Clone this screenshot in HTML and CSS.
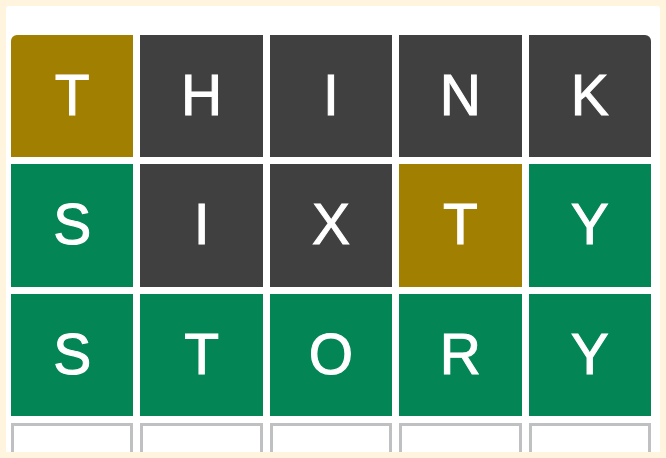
FILE: index.html
```html
<!DOCTYPE html>
<html lang="en">
<head>
<meta charset="utf-8">
<meta name="viewport" content="width=device-width, initial-scale=1">
<title>Word game</title>
<link rel="stylesheet" href="styles.css">
</head>
<body>
<main class="panel">
  <div class="board">
    <div class="tile present">T</div>
    <div class="tile absent">H</div>
    <div class="tile absent">I</div>
    <div class="tile absent">N</div>
    <div class="tile absent">K</div>
    <div class="tile correct">S</div>
    <div class="tile absent">I</div>
    <div class="tile absent">X</div>
    <div class="tile present">T</div>
    <div class="tile correct">Y</div>
    <div class="tile correct">S</div>
    <div class="tile correct">T</div>
    <div class="tile correct">O</div>
    <div class="tile correct">R</div>
    <div class="tile correct">Y</div>
    <div class="tile empty"></div>
    <div class="tile empty"></div>
    <div class="tile empty"></div>
    <div class="tile empty"></div>
    <div class="tile empty"></div>
  </div>
</main>
</body>
</html>
```
FILE: styles.css
```css
* {
  box-sizing: border-box;
}

body {
  margin: 0;
  padding: 6px;
  height: 100vh;
  background: #fff4de;
  font-family: "Liberation Sans", Arial, sans-serif;
}

.panel {
  height: 100%;
  padding: 29px 9px 0 5px;
  overflow: hidden;
  border-radius: 3px 3px 0 0;
  background: #fff;
}

.board {
  display: grid;
  grid-template-columns: repeat(5, 1fr);
  gap: 7px;
}

.tile {
  display: flex;
  align-items: center;
  justify-content: center;
  aspect-ratio: 1;
  padding-bottom: 2px;
  color: #fff;
  font-size: 57px;
  line-height: 1;
  -webkit-text-stroke: 1px #fff;
}

.tile:first-child {
  border-top-left-radius: 6px;
}

.tile:nth-child(5) {
  border-top-right-radius: 6px;
}

.present {
  background: #a17f00;
}

.absent {
  background: #414041;
}

.correct {
  background: #038555;
}

.empty {
  border: 3px solid #bfc0c2;
}
```
